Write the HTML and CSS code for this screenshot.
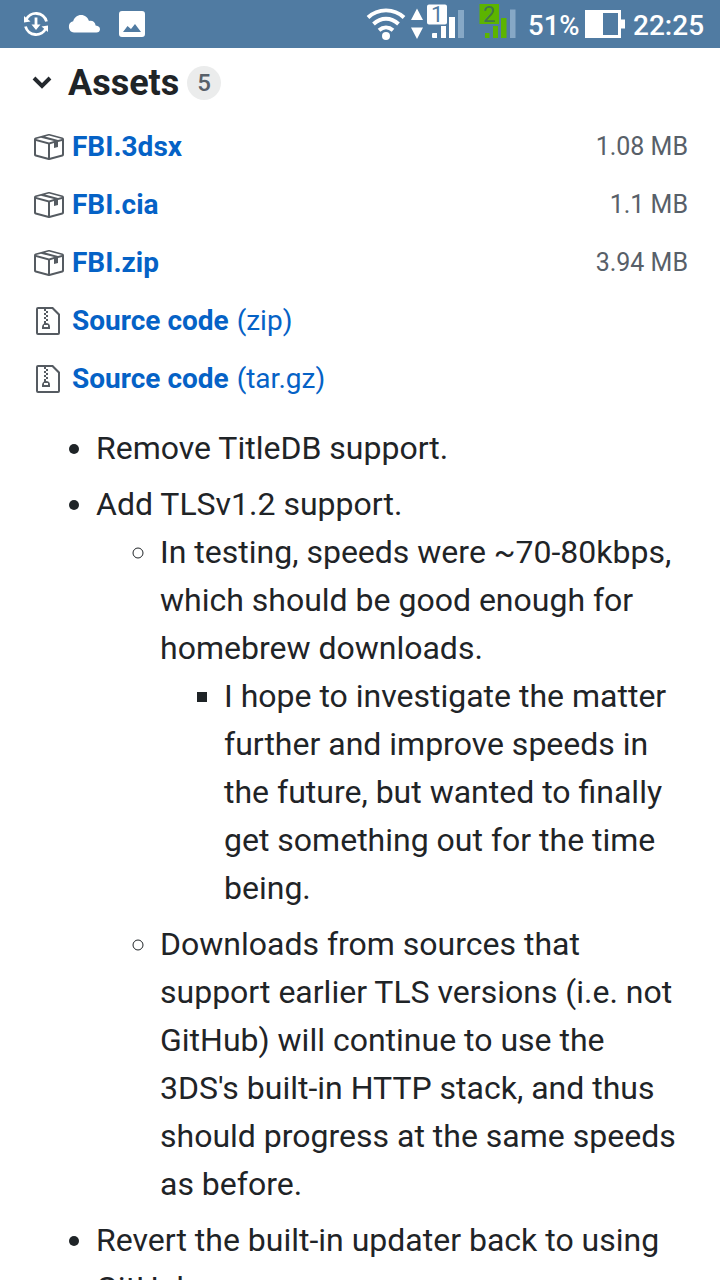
FILE: index.html
```
<!DOCTYPE html>
<html lang="en">
<head>
<meta charset="utf-8">
<title>Release assets</title>
<link rel="stylesheet" href="styles.css">
</head>
<body>
<svg class="defs" width="0" height="0" aria-hidden="true">
  <symbol id="package" viewBox="0 0 16 16"><path fill-rule="evenodd" d="M1 4.27v7.47c0 .45.3.84.75.97l6.5 1.73c.16.05.34.05.5 0l6.5-1.73c.45-.13.75-.52.75-.97V4.27c0-.45-.3-.84-.75-.97l-6.5-1.74a1.4 1.4 0 0 0-.5 0L1.75 3.3c-.45.13-.75.52-.75.97zm7 9.09l-6-1.59V5l6 1.61v6.75zM2 4l2.5-.67L11 5.06l-2.5.67L2 4zm13 7.77l-6 1.59V6.61l2-.55V8.5l2-.53V5.53L15 5v6.77zm-2-7.24L6.500 2.8l2-.53L15 4l-2 .53z"/></symbol>
  <symbol id="file-zip" viewBox="0 0 12 16"><path fill-rule="evenodd" d="M8.500 1H1a1 1 0 0 0-1 1v12a1 1 0 0 0 1 1h10a1 1 0 0 0 1-1V4.500L8.500 1zM11 14H1V2h3v1h1V2h3l3 3v9zM5 4V3h1v1H5zM4 4h1v1H4V4zm1 2V5h1v1H5zM4 6h1v1H4V6zm1 2V7h1v1H5zM4 9.280A2 2 0 0 0 3 11v1h4v-1a2 2 0 0 0-2-2V8H4v1.280zM6 10v1H4v-1h2z"/></symbol>
</svg>
<header class="status">
  <div class="notifications">
    <svg width="28" height="28" viewBox="0 0 28 28" fill="none" stroke="#fff" stroke-width="2.800"><path d="M4 10A10.900 10.900 0 0 1 24.500 11.500M24 18A10.900 10.900 0 0 1 3.500 16.500M14 7.500v9"/><path d="M9.500 14.500h9L14 20zM2 6v6.500l6.500-1zM26 22v-6.500l-6.500 1z" fill="#fff" stroke="none"/></svg>
    <svg width="32" height="20" viewBox="0 0 32 20" fill="#fff"><path d="M6 18.500a5.700 5.700 0 0 1-.8-11.200C6 3.500 9.500 1 13 1c4 0 6.800 2.500 8 6 3.500-.8 6.300 1.400 6.600 4.500C30.500 11.800 32 13.200 32 15.200s-1.500 3.300-3.500 3.300z"/></svg>
    <svg width="26" height="26" viewBox="0 0 26 26" fill="#fff"><path fill-rule="evenodd" d="M3 0h20a3 3 0 0 1 3 3v20a3 3 0 0 1-3 3H3a3 3 0 0 1-3-3V3a3 3 0 0 1 3-3zM4 21h18l-6-8-4 5-3.500-3z"/></svg>
  </div>
  <svg class="wifi" width="40" height="34" viewBox="0 0 40 34" fill="none" stroke="#fff" stroke-width="3.900"><path d="M2 10.500c10-9.500 26-9.500 36 0M7.500 17c7.500-7 17.500-7 25 0M13 23.200c4.200-3.700 9.800-3.700 14 0"/><circle cx="20" cy="29" r="4" fill="#fff" stroke="none"/></svg>
  <svg class="traffic" width="12" height="34" viewBox="0 0 12 34" fill="#fff"><path d="M0 13L6 1.500 12 13zM0 20.500h12L6 32z"/></svg>
  <svg class="signal" width="38" height="36" viewBox="0 0 38 36"><path fill="#fff" d="M2 .5h16a2 2 0 0 1 2 2v16a2 2 0 0 1-2 2H2a2 2 0 0 1-2-2v-16a2 2 0 0 1 2-2zM5 30a1 1 0 0 1 1-1h4v5H6a1 1 0 0 1-1-1zM14 22h5v12h-5zM22 13h6v21h-6z"/><path fill="#86a8c6" d="M31 6h6v28h-6z"/><text class="sim" x="4" y="18" fill="#507ba2">1</text></svg>
  <svg class="signal signal-two" width="38" height="36" viewBox="0 0 38 36"><path fill="#5cb400" d="M.5 0H20v20H.5zM6 29h4.500v5H6zM14 22h5v12h-5zM22 14h5.500v20H22z"/><path fill="#86a8c6" d="M31 5.500h5.500V34H31z"/><text class="sim" x="4" y="18" fill="#41754d">2</text></svg>
  <span class="percent">51%</span>
  <svg class="battery" width="40" height="28" viewBox="0 0 40 28"><path fill="#fff" fill-rule="evenodd" d="M0 0h36v9.500h4v9h-4V28H0zM18 3v22h15V3z"/></svg>
  <span class="clock">22:25</span>
</header>
<main>
  <h2 class="heading"><svg class="chevron" width="20" height="14" viewBox="0 0 20 14"><path d="M2 2l8 8 8-8" fill="none" stroke="#24292e" stroke-width="3.900"/></svg><span class="title">Assets</span><span class="count">5</span></h2>
  <ul class="assets">
    <li><svg class="icon"><use href="#package"/></svg><a><b>FBI.3dsx</b></a><small>1.08 MB</small></li>
    <li><svg class="icon"><use href="#package"/></svg><a><b>FBI.cia</b></a><small>1.1 MB</small></li>
    <li><svg class="icon"><use href="#package"/></svg><a><b>FBI.zip</b></a><small>3.94 MB</small></li>
    <li><svg class="icon"><use href="#file-zip"/></svg><a><b>Source code</b> <span class="format">(zip)</span></a></li>
    <li><svg class="icon"><use href="#file-zip"/></svg><a><b>Source code</b> <span class="format">(tar.gz)</span></a></li>
  </ul>
  <ul class="notes">
    <li>Remove TitleDB support.</li>
    <li>Add TLSv1.2 support.
      <ul>
        <li>In testing, speeds were ~70-80kbps,<br>which should be good enough for<br>homebrew downloads.
          <ul><li>I hope to investigate the matter<br>further and improve speeds in<br>the future, but wanted to finally<br>get something out for the time<br>being.</li></ul>
        </li>
        <li>Downloads from sources that<br>support earlier TLS versions (i.e. not<br>GitHub) will continue to use the<br>3DS's built-in HTTP stack, and thus<br>should progress at the same speeds<br>as before.</li>
      </ul>
    </li>
    <li>Revert the built-in updater back to using<br>GitHub.</li>
  </ul>
</main>
</body>
</html>
```
FILE: styles.css
```
* { box-sizing: border-box; }
body { margin: 0; height: 1280px; overflow: hidden; background: #fff; color: #1f2427; font-family: Roboto, sans-serif; }
ul { margin: 0; padding: 0; }
.defs { display: none; }
.status { display: flex; align-items: flex-start; height: 48px; background: #507ba2; color: #fff; }
.notifications { display: flex; align-items: center; gap: 18px; height: 48px; padding-left: 22px; }
.notifications svg:nth-child(3) { margin-left: 1px; }
.wifi { margin: 7px 0 0 221px; }
.traffic { margin: 7px 0 0 5px; }
.signal { margin: 4px 0 0 4px; overflow: visible; }
.signal-two { margin-left: 14px; }
.sim { font: 22px/20px Roboto, sans-serif; }
.percent, .clock { font-size: 28px; line-height: 52px; font-weight: 500; white-space: nowrap; }
.percent { width: 57px; margin-left: 11px; font-size: 27.5px; }
.battery { margin-top: 10px; }
.clock { margin-left: 8px; }
main { padding: 16px 32px 0; }
.heading { display: flex; align-items: center; height: 38px; margin: 0; font-size: 36px; }
.title { width: 119px; margin-left: 16px; white-space: nowrap; }
.count { width: 34px; height: 34px; border-radius: 17px; background: #ebecec; color: #586069; font-size: 24px; line-height: 34px; font-weight: 500; text-align: center; }
.assets { margin-top: 16px; list-style: none; }
.assets li { display: flex; align-items: center; height: 58px; font-size: 28px; }
.icon { width: 32px; height: 32px; margin-right: 8px; fill: #555b61; }
a { color: #0562c6; white-space: nowrap; padding-bottom: 2px; }
b { font-weight: 700; }
.format { margin-left: 1px; }
small { margin-left: auto; padding-bottom: 2px; color: #586069; font-size: 25px; }
.notes { margin-top: 16px; padding-left: 64px; font-size: 32px; line-height: 48px; list-style: disc; white-space: nowrap; }
.notes li + li { margin-top: 8px; }
.notes ul { padding-left: 64px; list-style: circle; }
.notes ul ul { list-style: square; }
```
